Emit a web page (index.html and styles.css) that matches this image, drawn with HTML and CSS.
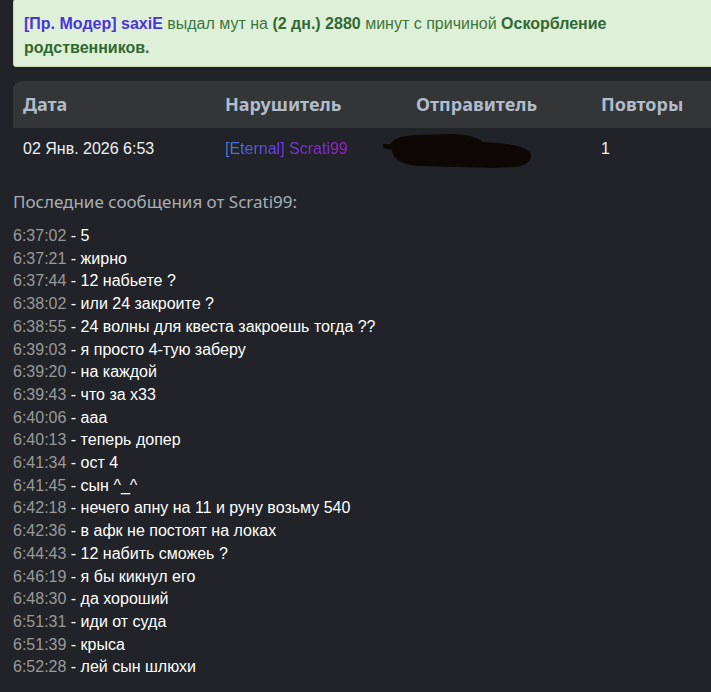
FILE: index.html
```html
<!DOCTYPE html>
<html lang="ru">
<head>
<meta charset="utf-8">
<link rel="stylesheet" href="styles.css">
</head>
<body>
<div class="page">
  <div class="alert">
    <b class="mod">[Пр. Модер] saxiE</b> выдал мут на <b>(2 дн.) 2880</b> минут с причиной <b>Оскорбление родственников.</b>
  </div>
  <table class="tbl">
    <thead>
      <tr><th class="c1">Дата</th><th class="c2">Нарушитель</th><th class="c3">Отправитель</th><th class="c4">Повторы</th></tr>
    </thead>
    <tbody>
      <tr>
        <td>02 Янв. 2026 6:53</td>
        <td><span class="nick">[Eternal] Scrati99</span></td>
        <td class="redact-cell"><svg class="blob" width="150" height="34" viewBox="0 0 150 34"><path d="M0 10 L8 10 C10 4 20 2 32 1 L70 0 C84 0 96 4 100 8 C120 9 140 11 147 18 C150 24 146 32 132 33 L110 34 C90 33 60 33 38 32 C20 31 10 26 9 16 L0 14 Z" fill="#0d0705"/></svg></td>
        <td>1</td>
      </tr>
    </tbody>
  </table>
  <h4 class="title">Последние сообщения от Scrati99:</h4>
  <ul class="msgs">
    <li><span class="t">6:37:02</span> - 5</li>
    <li><span class="t">6:37:21</span> - жирно</li>
    <li><span class="t">6:37:44</span> - 12 набьете ?</li>
    <li><span class="t">6:38:02</span> - или 24 закроите ?</li>
    <li><span class="t">6:38:55</span> - 24 волны для квеста закроешь тогда ??</li>
    <li><span class="t">6:39:03</span> - я просто 4-тую заберу</li>
    <li><span class="t">6:39:20</span> - на каждой</li>
    <li><span class="t">6:39:43</span> - что за х33</li>
    <li><span class="t">6:40:06</span> - ааа</li>
    <li><span class="t">6:40:13</span> - теперь допер</li>
    <li><span class="t">6:41:34</span> - ост 4</li>
    <li><span class="t">6:41:45</span> - сын ^_^</li>
    <li><span class="t">6:42:18</span> - нечего апну на 11 и руну возьму 540</li>
    <li><span class="t">6:42:36</span> - в афк не постоят на локах</li>
    <li><span class="t">6:44:43</span> - 12 набить сможеь ?</li>
    <li><span class="t">6:46:19</span> - я бы кикнул его</li>
    <li><span class="t">6:48:30</span> - да хороший</li>
    <li><span class="t">6:51:31</span> - иди от суда</li>
    <li><span class="t">6:51:39</span> - крыса</li>
    <li><span class="t">6:52:28</span> - лей сын шлюхи</li>
  </ul>
</div>
</body>
</html>
```

FILE: styles.css
```css
html, body {
  margin: 0;
  padding: 0;
  background: #212328;
  overflow: hidden;
}
body {
  font-family: "Liberation Sans", Arial, sans-serif;
  font-size: 16px;
  line-height: 1.42857;
  color: #ffffff;
}
.page {
  width: 704px;
  padding-left: 13px;
}
.alert {
  background: #dff0d8;
  border: 1px solid #c6dfb8;
  border-radius: 3px;
  color: #3c763d;
  padding: 12px 10px 6px 10px;
  line-height: 24px;
  margin-top: -1px;
}
.alert b { color: #2f6a32; }
.alert b.mod { color: #4a34e0; }
.tbl {
  margin-top: 14px;
  width: 100%;
  border-collapse: separate;
  border-spacing: 0;
}
.tbl th {
  background: #343536;
  font-family: "Noto Sans", "Open Sans", sans-serif;
  font-weight: 700;
  font-size: 18px;
  color: #b0bccb;
  text-align: left;
  height: 47px;
  padding: 0 10px;
  vertical-align: middle;
}
.tbl th.c1 { width: 182px; border-top-left-radius: 9px; }
.tbl th.c2 { width: 171px; }
.tbl th.c3 { width: 165px; }
.tbl td {
  height: 43px;
  padding: 0 10px;
  vertical-align: middle;
  color: #eef0f4;
}
.nick {
  background: linear-gradient(90deg, #3f7ae6 0%, #6a3ee0 45%, #9b1ec8 100%);
  -webkit-background-clip: text;
  background-clip: text;
  color: transparent;
}
.blob { display: block; margin-left: -33px; margin-top: 2px; }
.title {
  font-family: "Noto Sans", "Open Sans", sans-serif;
  font-weight: 400;
  font-size: 17px;
  color: #a8aeb6;
  margin: 19px 0 11px 0;
  line-height: 24px;
}
.msgs {
  list-style: none;
  margin: 0;
  padding: 0;
}
.msgs li { color: #ffffff; line-height: 22.7px; }
.t { color: #9a9a9a; }
```
